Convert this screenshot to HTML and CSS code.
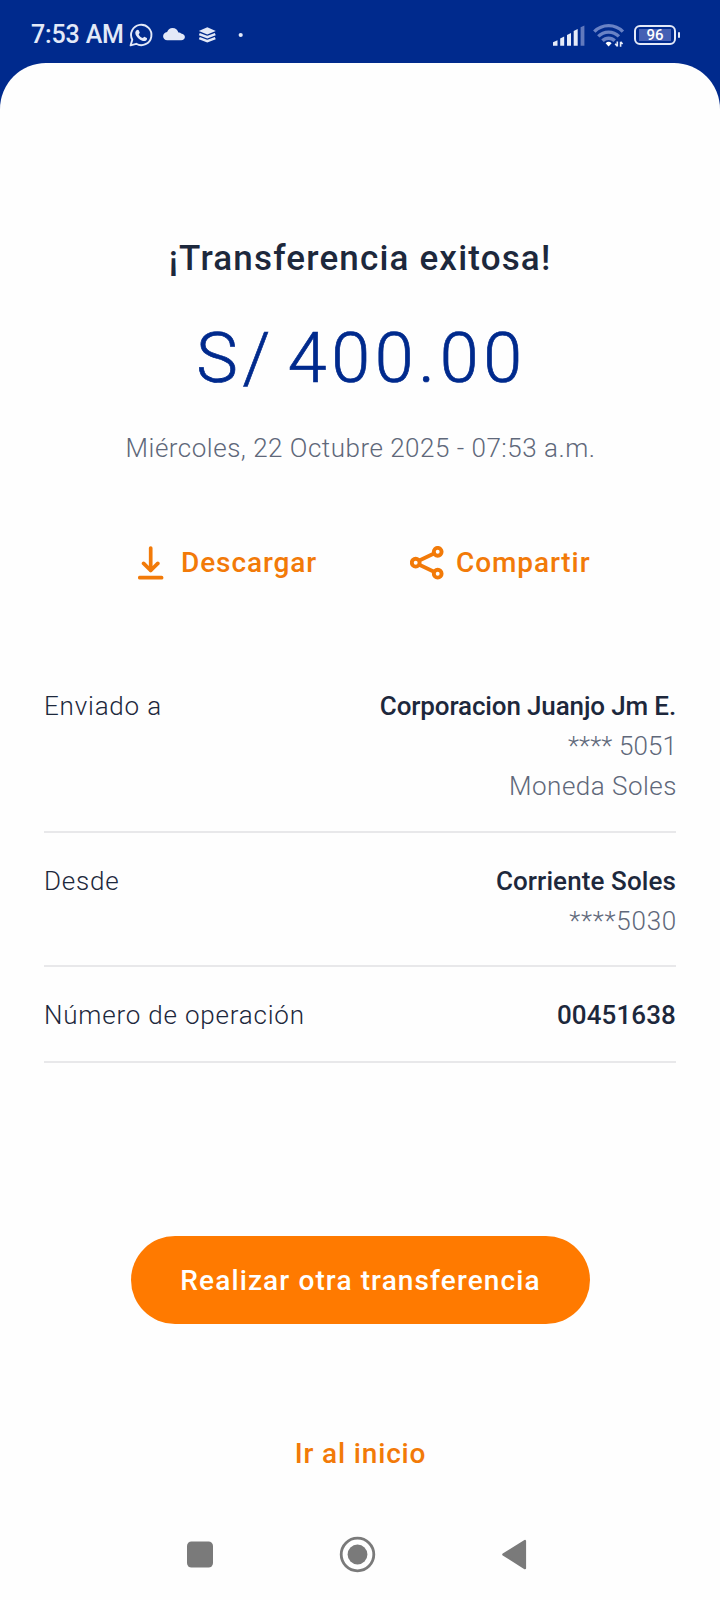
FILE: index.html
```html
<!DOCTYPE html>
<html lang="es">
<head>
<meta charset="utf-8">
<meta name="viewport" content="width=device-width, initial-scale=1">
<title>Transferencia exitosa</title>
<link rel="stylesheet" href="styles.css">
</head>
<body>
<div class="screen">
  <header class="status-bar">
    <div class="status-left">
      <span class="clock">7:53 AM</span>
      <svg class="notifications" width="120" height="26" viewBox="128 21 120 26" aria-hidden="true">
        <path d="M130.600 44.400 132.300 38.800A10.200 10.200 0 1 1 136.200 42.800Z" fill="none" stroke="#e3e9f8" stroke-width="1.900" stroke-linejoin="round"/>
        <path d="M136.600 29.200c.5-.6 1.700-.7 2.100.1l1 2.300c.1.500-.9 1.400-1 1.800.8 1.700 2.200 2.900 4 3.600.5 0 1.200-1.400 1.700-1.300l2.400 1.200c.7.500 0 2.100-.7 2.600-1.800 1.300-4.600.3-6.600-1.200-2.100-1.500-4.200-4.100-4.200-6.200 0-1.200.5-2.200 1.300-2.900Z" fill="#e3e9f8"/>
        <path d="M167.300 39.300c-2.500 0-4.200-1.800-4.200-4s1.700-4.200 4-4.400c1.100-2.500 2.900-4 5.300-4 3.200 0 5.300 2 6 4.700 1.100-.3 2 .1 2.700 1 2.300.4 3.800 1.700 3.800 3.500 0 2-1.500 3.200-3.700 3.200Z" fill="#e3e9f8"/>
        <path d="M207.300 26.200 215.800 30 207.300 33.600 198.800 30Z" fill="#e3e9f8"/>
        <path d="M199.300 33.100 207.300 36.200 215.300 33.100M199.300 37.100 207.300 40.200 215.300 37.100" fill="none" stroke="#e3e9f8" stroke-width="2.500"/>
        <circle cx="240.700" cy="34" r="2.100" fill="#e3e9f8"/>
      </svg>
    </div>
    <div class="status-right">
      <svg width="94" height="26" viewBox="552 21 94 26" aria-hidden="true">
        <g fill="#e6ebf8">
          <path d="M553 41.200 557.500 39.200V44.700H553Z"/>
          <path d="M560.200 37.500 564.200 35.500V44.700H560.200Z"/>
          <path d="M567 34 571 32V44.700H567Z"/>
          <path d="M573.700 30 577.700 28V44.700H573.700Z"/>
        </g>
        <path d="M580.600 26.300 584.400 24.600V44.700H580.600Z" fill="#6179bd"/>
        <g fill="none" stroke="#6982c5" stroke-width="3.400">
          <path d="M594.300 30.600a20 20 0 0 1 28.600 0"/>
          <path d="M598.300 35.400a14.500 14.500 0 0 1 20.600 0"/>
          <path d="M602.500 39.800a8.500 8.500 0 0 1 12.200 0"/>
        </g>
        <path d="M605.600 42.200c1.800-1.800 4.200-1.800 6 0l-3 3.300Z" fill="#fff"/>
        <path d="M617.300 40.500V45.600M615.200 42.800 617.300 45.300M620.600 45.800V40.700M622.600 43 620.600 40.900" fill="none" stroke="#e6ebf8" stroke-width="1.600"/>
      </svg>
      <span class="battery"><span class="battery-level">96</span></span>
      <span class="battery-tip"></span>
    </div>
  </header>

  <main class="sheet">
    <h1 class="title">¡Transferencia exitosa!</h1>
    <p class="amount">S/ 400.00</p>
    <p class="date">Miércoles, 22 Octubre 2025 - 07:53 a.m.</p>

    <div class="actions">
      <a class="action">
        <svg width="26" height="34" viewBox="0 0 26 34" fill="none" stroke="#f27a08" stroke-width="3.700" stroke-linecap="round" stroke-linejoin="round" aria-hidden="true">
          <path d="M12.700 2V24.500M5.600 17.400 12.700 24.500 19.800 17.400M1.800 31.700H23.600"/>
        </svg>
        <span>Descargar</span>
      </a>
      <a class="action share">
        <svg width="34" height="34" viewBox="0 0 34 34" fill="none" stroke="#f27a08" stroke-width="3.900" aria-hidden="true">
          <path d="M8.800 14.800 24 7.600M8.800 18.600 24 25.800"/>
          <circle cx="5.700" cy="16.700" r="3.900"/>
          <circle cx="27.700" cy="5.800" r="3.900"/>
          <circle cx="27.700" cy="27.700" r="3.900"/>
        </svg>
        <span>Compartir</span>
      </a>
    </div>

    <section class="details">
      <div class="row recipient">
        <span class="label">Enviado a</span>
        <div class="values">
          <strong class="main name">Corporacion Juanjo Jm E.</strong>
          <span class="sub spaced">**** 5051</span>
          <span class="sub">Moneda Soles</span>
        </div>
      </div>
      <div class="row source">
        <span class="label">Desde</span>
        <div class="values">
          <strong class="main">Corriente Soles</strong>
          <span class="sub account">****5030</span>
        </div>
      </div>
      <div class="row operation">
        <span class="label">Número de operación</span>
        <div class="values"><strong class="main">00451638</strong></div>
      </div>
    </section>

    <button class="primary">Realizar otra transferencia</button>
    <a class="home-link">Ir al inicio</a>

    <nav class="system-nav">
      <svg width="340" height="38" viewBox="187 1536 340 38" fill="#7a7a7a" aria-hidden="true">
        <rect x="187" y="1541.500" width="26" height="26" rx="4.500"/>
        <circle cx="357.500" cy="1554.500" r="16.300" fill="none" stroke="#7a7a7a" stroke-width="2.800"/>
        <circle cx="357.500" cy="1554.500" r="9.900"/>
        <path d="M503.300 1554.500 525 1541V1568.200Z" stroke="#7a7a7a" stroke-width="2.200" stroke-linejoin="round"/>
      </svg>
    </nav>
  </main>
</div>
</body>
</html>
```

FILE: styles.css
```css
* { box-sizing: border-box; }

body {
  margin: 0;
  font-family: Roboto, "Open Sans", sans-serif;
  background: #002a8d;
  color: #1d283c;
}

h1, p { margin: 0; }

.screen {
  width: 720px;
  height: 1600px;
  display: flex;
  flex-direction: column;
  background: #002a8d;
}

.status-bar {
  height: 62.500px;
  padding: 9px 40px 0 31px;
  display: flex;
  justify-content: space-between;
  align-items: center;
}

.status-left, .status-right {
  display: flex;
  align-items: center;
  height: 54px;
  padding-bottom: 2px;
}

.clock {
  width: 97px;
  font-size: 25px;
  font-weight: 500;
  line-height: 30px;
  letter-spacing: -0.150px;
  white-space: nowrap;
  color: #e3e9f8;
}

.battery {
  width: 42px;
  height: 20px;
  margin-left: -12px;
  padding: 2px 3px;
  border: 2px solid #e3e9f8;
  border-radius: 6px;
}

.battery-level {
  display: block;
  height: 12px;
  background: #4560b4;
  color: #fff;
  font-size: 15px;
  font-weight: 500;
  line-height: 13px;
  text-align: center;
}

.battery-tip {
  width: 2px;
  height: 6px;
  margin-left: 2px;
  border-radius: 1px;
  background: #e3e9f8;
}

.sheet {
  flex: 1;
  display: flex;
  flex-direction: column;
  align-items: center;
  padding-top: 176.500px;
  border-radius: 46px 46px 0 0;
  background: #fefefe;
}

.title {
  font-size: 35px;
  font-weight: 500;
  line-height: 40px;
  letter-spacing: 1.170px;
}

.amount {
  margin-top: 39px;
  font-size: 70px;
  font-weight: 300;
  line-height: 80px;
  letter-spacing: 4.700px;
  word-spacing: -9px;
  text-indent: 3px;
  -webkit-text-stroke: 0.700px #002a8d;
  color: #002a8d;
}

.date {
  margin-top: 30px;
  font-size: 26px;
  font-weight: 300;
  line-height: 40px;
  letter-spacing: 0.500px;
  text-indent: 1px;
  color: #5f687a;
}

.actions {
  width: 100%;
  margin-top: 75px;
  padding-left: 138px;
  display: flex;
}

.action {
  width: 272px;
  height: 40px;
  display: flex;
  align-items: center;
  gap: 17px;
  font-size: 28px;
  font-weight: 500;
  line-height: 40px;
  letter-spacing: 0.900px;
  color: #f27a08;
}

.share { gap: 12px; }

.details {
  width: 632px;
  margin-top: 103px;
  font-size: 26px;
  line-height: 40px;
}

.row {
  display: flex;
  justify-content: space-between;
  border-bottom: 2px solid #e8e8ea;
}

.recipient { padding-bottom: 25px; }
.source { padding: 28px 0 24px; }
.operation { padding: 28px 0 26px; }

.label {
  font-weight: 300;
  letter-spacing: 0.800px;
}

.values {
  display: flex;
  flex-direction: column;
  align-items: flex-end;
}

.main { font-weight: 500; letter-spacing: 0.100px; }
.name { letter-spacing: -0.140px; }

.sub {
  margin-right: -1px;
  font-weight: 300;
  letter-spacing: 0.500px;
  color: #5f687a;
}

.spaced { letter-spacing: 0.100px; }
.account { letter-spacing: 0.750px; }

.primary {
  width: 459px;
  height: 88px;
  margin-top: 173px;
  padding: 1px 0 0 1px;
  border: 0;
  border-radius: 44px;
  background: #ff7a00;
  color: #fff;
  font: 500 28px/40px Roboto, sans-serif;
  letter-spacing: 1.120px;
}

.home-link {
  margin-top: 110px;
  padding-left: 1px;
  font-size: 28px;
  font-weight: 500;
  line-height: 40px;
  letter-spacing: 0.850px;
  color: #f27a08;
}

.system-nav {
  width: 340px;
  height: 38px;
  margin-top: 62px;
  transform: translateX(-3px);
}

svg { display: block; flex: none; }
```
